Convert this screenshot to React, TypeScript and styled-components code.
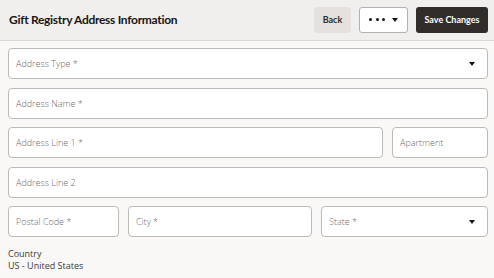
import styled, { createGlobalStyle } from "styled-components";

const GlobalStyle = createGlobalStyle`
  html, body {
    margin: 0;
    padding: 0;
    background: #f9f8f7;
    font-family: Lato, "Open Sans", sans-serif;
  }
`;

const Page = styled.div`
  width: 494px;
  min-height: 278px;
  background: #f9f8f7;
`;

const Header = styled.header`
  height: 41px;
  box-sizing: border-box;
  display: flex;
  align-items: center;
  padding: 0 6px 1px 9px;
  background: #f1efed;
  border-bottom: 1px solid #d9d6d3;
`;

const Title = styled.h1`
  flex: 1;
  margin: 0;
  font-size: 12px;
  font-weight: 700;
  letter-spacing: -0.3px;
  color: #161513;
`;

const Actions = styled.div`
  display: flex;
  gap: 8px;
`;

const Button = styled.button<{ variant?: "plain" | "outline" | "solid"; w: number }>`
  height: 26px;
  width: ${(p) => p.w}px;
  box-sizing: border-box;
  border-radius: 3px;
  font-family: inherit;
  font-size: 9px;
  font-weight: 700;
  white-space: nowrap;
  padding: 0 ${(p) => (p.variant === "outline" ? 9 : 4)}px;
  display: flex;
  align-items: center;
  justify-content: ${(p) => (p.variant === "outline" ? "space-between" : "center")};
  cursor: pointer;
  border: 1px solid
    ${(p) => (p.variant === "outline" ? "#b4b0ad" : "transparent")};
  background: ${(p) =>
    p.variant === "solid" ? "#312d2a" : p.variant === "outline" ? "#fff" : "#e4e1de"};
  color: ${(p) => (p.variant === "solid" ? "#fff" : "#312d2a")};
`;

const Dots = styled.span`
  display: flex;
  gap: 3.5px;
  span {
    width: 3px;
    height: 3px;
    border-radius: 50%;
    background: #161513;
  }
`;

const Caret = styled.span`
  width: 0;
  height: 0;
  border-left: 3.5px solid transparent;
  border-right: 3.5px solid transparent;
  border-top: 4px solid #161513;
`;

const Form = styled.div`
  padding: 7px 6px 8px 8px;
  display: flex;
  flex-direction: column;
  gap: 8.5px;
`;

const Row = styled.div`
  display: flex;
  gap: 9px;
`;

const Field = styled.div<{ w?: number }>`
  ${(p) => (p.w ? `width: ${p.w}px; flex: none;` : "flex: 1;")}
  height: 31px;
  box-sizing: border-box;
  background: #fff;
  border: 1px solid #bdb9b5;
  border-radius: 4px;
  display: flex;
  align-items: center;
  padding: 0 12px 0 7px;
  font-family: "Open Sans", sans-serif;
  font-size: 9px;
  font-weight: 300;
  color: #6f6b67;
`;

const Label = styled.span`
  flex: 1;
`;

const Info = styled.div`
  margin-top: 2px;
  font-family: "Open Sans", sans-serif;
  font-size: 9px;
  color: #3d3935;
  line-height: 12px;
`;

export default function App() {
  return (
    <Page>
      <GlobalStyle />
      <Header>
        <Title>Gift Registry Address Information</Title>
        <Actions>
          <Button w={37}>Back</Button>
          <Button variant="outline" w={49}>
            <Dots>
              <span />
              <span />
              <span />
            </Dots>
            <Caret />
          </Button>
          <Button variant="solid" w={72}>
            Save Changes
          </Button>
        </Actions>
      </Header>
      <Form>
        <Row>
          <Field>
            <Label>Address Type *</Label>
            <Caret />
          </Field>
        </Row>
        <Row>
          <Field>
            <Label>Address Name *</Label>
          </Field>
        </Row>
        <Row>
          <Field>
            <Label>Address Line 1 *</Label>
          </Field>
          <Field w={96}>
            <Label>Apartment</Label>
          </Field>
        </Row>
        <Row>
          <Field>
            <Label>Address Line 2</Label>
          </Field>
        </Row>
        <Row>
          <Field w={111}>
            <Label>Postal Code *</Label>
          </Field>
          <Field w={184}>
            <Label>City *</Label>
          </Field>
          <Field>
            <Label>State *</Label>
            <Caret />
          </Field>
        </Row>
        <Info>
          Country
          <br />
          US - United States
        </Info>
      </Form>
    </Page>
  );
}
